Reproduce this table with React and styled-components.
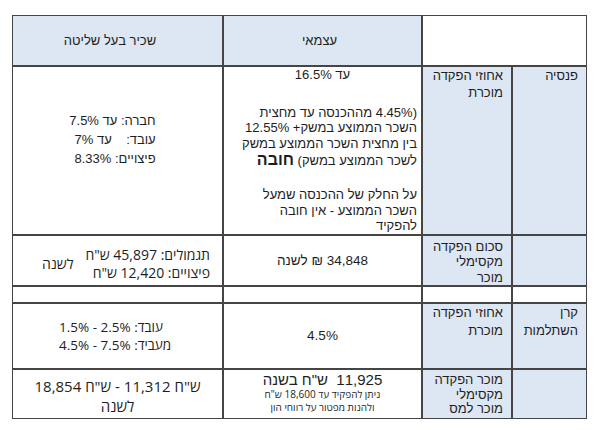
import React from 'react';
import styled, { createGlobalStyle, css } from 'styled-components';

const GlobalStyle = createGlobalStyle`
  html, body {
    margin: 0;
    padding: 0;
    background: #ffffff;
  }
  body {
    font-family: "Liberation Sans", "DejaVu Sans", sans-serif;
    color: #1e1e1e;
  }
`;

const Page = styled.div`
  width: 600px;
  height: 430px;
  padding: 15px 0 0 12px;
  box-sizing: border-box;
`;

const Table = styled.table`
  direction: rtl;
  border-collapse: separate;
  border-spacing: 0;
  table-layout: fixed;
  width: 575px;
  font-size: 13px;
  line-height: 15.5px;
`;

const Col = styled.col`
  width: ${({ $w }) => $w}px;
`;

const Row = styled.tr`
  height: ${({ $h }) => $h}px;
`;

const Cell = styled.td`
  border: 1px solid #454545;
  padding: ${({ $pad }) => $pad || '0 8px'};
  vertical-align: ${({ $valign }) => $valign || 'top'};
  text-align: ${({ $align }) => $align || 'right'};
  background: ${({ $blue }) => ($blue ? '#dde7f3' : '#ffffff')};
  box-sizing: border-box;
  ${({ $open }) =>
    $open &&
    css`
      font-family: "Open Sans", "DejaVu Sans", sans-serif;
    `}
`;

const HeadText = styled.div`
  font-size: 13px;
  text-align: center;
`;

const Label = styled.div`
  padding-top: ${({ $top }) => $top ?? 0}px;
  line-height: ${({ $lh }) => $lh || 17}px;
`;

const Stack = styled.div`
  display: inline-block;
  text-align: right;
  line-height: 19px;
  white-space: pre;
`;

const TextLine = styled.div`
  white-space: nowrap;
  text-align: ${({ $align }) => $align || 'right'};
  line-height: ${({ $lh }) => $lh || 15.5}px;
  margin-top: ${({ $gap }) => $gap || 0}px;
`;

const Strong = styled.b`
  font-size: 16px;
  font-weight: 700;
`;

const SplitRow = styled.div`
  display: flex;
  align-items: center;
  justify-content: flex-start;
  gap: 12px;
  font-size: 14px;
  line-height: 18.5px;
  padding-right: 4px;
`;

const Lines = styled.div`
  text-align: right;
  white-space: nowrap;
`;

const Range = styled.div`
  text-align: left;
  padding-left: 38px;
  font-size: 13.5px;
  line-height: 18px;
`;

const BigCenter = styled.div`
  direction: ltr;
  text-align: center;
  font-size: 15px;
  line-height: 20px;
`;

const Seg = styled.span`
  direction: ltr;
  unicode-bidi: isolate;
`;

const Amount = styled.div`
  text-align: center;
  font-size: 15px;
  line-height: 17px;
  padding-top: 1px;
`;

const Note = styled.div`
  text-align: center;
  font-family: "Open Sans", "DejaVu Sans", sans-serif;
  font-size: 10px;
  line-height: 13px;
`;

const Plain = styled.div`
  text-align: center;
  font-size: 13.5px;
`;

const App = () => {
  return (
    <Page>
      <GlobalStyle />
      <Table>
        <colgroup>
          <Col $w={75} />
          <Col $w={90} />
          <Col $w={199} />
          <Col $w={211} />
        </colgroup>
        <tbody>
          <Row $h={51}>
            <Cell colSpan={2} />
            <Cell $blue $valign="middle" $pad="0 10px 0 4px">
              <HeadText>עצמאי</HeadText>
            </Cell>
            <Cell $blue $valign="middle" $pad="0 20px 0 5px">
              <HeadText>שכיר בעל שליטה</HeadText>
            </Cell>
          </Row>

          <Row $h={166}>
            <Cell $blue>
              <Label>פנסיה</Label>
            </Cell>
            <Cell $blue>
              <Label>
                אחוזי הפקדה
                <br />
                מוכרת
              </Label>
            </Cell>
            <Cell $pad="0 4px 0 4px">
              <TextLine $align="center">עד 16.5%</TextLine>
              <TextLine $gap={22}>
                (4.45% מההכנסה עד מחצית
                <br />
                השכר הממוצע במשק+ 12.55%
                <br />
                בין מחצית השכר הממוצע במשק
              </TextLine>
              <TextLine $lh={18}>
                לשכר הממוצע במשק) <Strong>חובה</Strong>
              </TextLine>
              <TextLine $gap={17}>
                על החלק של ההכנסה שמעל
                <br />
                השכר הממוצע - אין חובה
                <br />
                להפקיד
              </TextLine>
            </Cell>
            <Cell $align="center" $pad="44px 18px 0 8px">
              <Stack>
                {'חברה: עד 7.5%\nעובד:    עד 7%\nפיצויים: 8.33%'}
              </Stack>
            </Cell>
          </Row>

          <Row $h={50}>
            <Cell $blue />
            <Cell $blue>
              <Label $top={3} $lh={15.5}>
                סכום הפקדה
                <br />
                מקסימלי
                <br />
                מוכר
              </Label>
            </Cell>
            <Cell $valign="middle">
              <Plain>34,848 ₪ לשנה</Plain>
            </Cell>
            <Cell $valign="middle" $open $pad="8px 8px 0">
              <SplitRow>
                <Lines>
                  <div>תגמולים: 45,897 ש"ח</div>
                  <div>פיצויים: 12,420 ש"ח</div>
                </Lines>
                <Lines>לשנה</Lines>
              </SplitRow>
            </Cell>
          </Row>

          <Row $h={17}>
            <Cell />
            <Cell />
            <Cell />
            <Cell />
          </Row>

          <Row $h={66}>
            <Cell $blue>
              <Label $lh={18}>
                קרן
                <br />
                השתלמות
              </Label>
            </Cell>
            <Cell $blue>
              <Label $lh={18}>
                אחוזי הפקדה
                <br />
                מוכרת
              </Label>
            </Cell>
            <Cell $valign="middle">
              <Plain>4.5%</Plain>
            </Cell>
            <Cell $valign="middle" $open>
              <Range>
                <div>עובד: 2.5% - 1.5%</div>
                <div>מעביד: 7.5% - 4.5%</div>
              </Range>
            </Cell>
          </Row>

          <Row $h={50}>
            <Cell $blue />
            <Cell $blue>
              <Label $top={3} $lh={14.5}>
                מוכר הפקדה
                <br />
                מקסימלי
                <br />
                מוכר למס
              </Label>
            </Cell>
            <Cell $pad="0 8px">
              <Amount>11,925&nbsp; ש"ח בשנה</Amount>
              <Note>ניתן להפקיד עד 18,600 ש"ח</Note>
              <Note>ולהנות מפטור על רווחי הון</Note>
            </Cell>
            <Cell $valign="middle" $open $pad="4px 8px 0">
              <BigCenter>
                <Seg>18,854 ש"ח</Seg> - <Seg>11,312 ש"ח</Seg>
                <br />
                לשנה
              </BigCenter>
            </Cell>
          </Row>
        </tbody>
      </Table>
    </Page>
  );
};

export default App;
